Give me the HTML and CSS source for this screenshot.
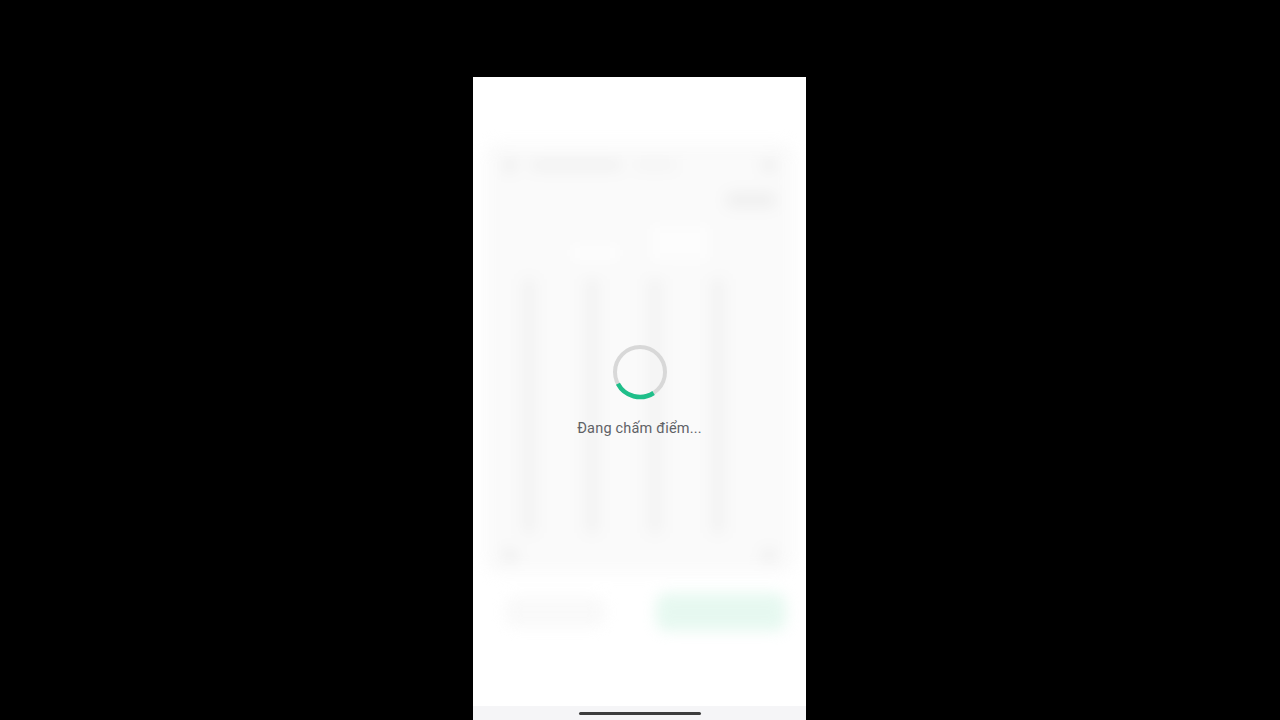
FILE: index.html
```html
<!DOCTYPE html>
<html lang="vi">
<head>
    <meta charset="UTF-8">
    <meta name="viewport" content="width=device-width, initial-scale=1.0">
    <title>Đang chấm điểm</title>
    <link rel="stylesheet" href="styles.css">
</head>
<body>

    <div class="phone">
        <div class="screen">

            <!-- Blurred page behind the loading overlay -->
            <div class="backdrop">
                <div class="bd-card">
                    <div class="bd-header">
                        <span class="bd-dot"></span>
                        <span class="bd-title"></span>
                        <span class="bd-sub"></span>
                        <span class="bd-dot"></span>
                    </div>
                    <div class="bd-row">
                        <span class="bd-chip"></span>
                    </div>
                    <div class="bd-mid">
                        <span class="bd-box"></span>
                        <span class="bd-box tall"></span>
                    </div>
                    <div class="bd-cols">
                        <span class="bd-col"></span>
                        <span class="bd-col"></span>
                        <span class="bd-col"></span>
                        <span class="bd-col"></span>
                    </div>
                    <div class="bd-foot">
                        <span class="bd-dot"></span>
                        <span class="bd-dot"></span>
                    </div>
                </div>
                <div class="bd-actions">
                    <span class="bd-ghost"></span>
                    <span class="bd-btn"></span>
                </div>
            </div>

            <!-- Loading overlay -->
            <div class="loading">
                <svg class="spinner" viewBox="0 0 56 56" width="56" height="56">
                    <circle cx="28" cy="28" r="25" fill="none" stroke="#d8d8d8" stroke-width="4"/>
                    <path d="M41.6 49 A25 25 0 0 1 5.9 39.7" fill="none" stroke="#1fbf8a" stroke-width="4.5" stroke-linecap="butt"/>
                </svg>
                <div class="loading-text">Đang chấm điểm...</div>
            </div>
        </div>

        <div class="home-area">
            <span class="home-bar"></span>
        </div>
    </div>

</body>
</html>
```

FILE: styles.css
```css
/* --- Page --- */
body {
    margin: 0;
    padding: 0 0 0 473px;
    background: #000;
    display: flex;
    height: 720px;
    overflow: hidden;
    font-family: Roboto, "Noto Sans", sans-serif;
}

/* --- Phone frame --- */
.phone {
    width: 333px;
    margin-top: 77px;
    height: 643px;
    background: #fff;
    display: flex; flex-direction: column;
}
.screen {
    flex: 1;
    position: relative;
    overflow: hidden;
}

/* --- Blurred background page --- */
.backdrop {
    position: absolute; inset: 0;
    padding: 66px 12px 0;
    display: flex; flex-direction: column; gap: 20px;
    filter: blur(7px);
    opacity: 0.45;
}
.bd-card {
    height: 430px;
    background: #f4f4f4;
    border-radius: 12px;
    padding: 10px 18px;
    box-sizing: border-box;
    display: flex; flex-direction: column; gap: 16px;
}
.bd-header {
    display: flex; align-items: center; gap: 14px;
    height: 24px;
}
.bd-dot {
    width: 14px; height: 14px;
    border-radius: 50%;
    background: #dcdcdc;
}
.bd-title { width: 90px; height: 10px; background: #e0e0e0; }
.bd-sub { width: 40px; height: 8px; background: #e6e6e6; margin-right: auto; }
.bd-row { display: flex; justify-content: flex-end; }
.bd-chip { width: 50px; height: 14px; background: #dcdcdc; border-radius: 7px; }
.bd-mid {
    display: flex; justify-content: center; gap: 30px;
    height: 40px;
}
.bd-box { width: 50px; height: 20px; background: #fbfbfb; margin-top: 20px; }
.bd-box.tall { width: 60px; height: 40px; margin-top: 0; }
.bd-cols {
    flex: 1;
    display: flex; gap: 51px;
    padding: 0 0 0 20px;
}
.bd-col { width: 12px; background: #e4e4e4; }
.bd-foot { display: flex; justify-content: space-between; }
.bd-actions {
    display: flex; justify-content: space-between; align-items: center;
    padding: 0 8px 0 20px;
}
.bd-ghost { width: 100px; height: 30px; background: #f2f2f2; border-radius: 8px; }
.bd-btn { width: 130px; height: 38px; background: #c9f1df; border-radius: 10px; }

/* --- Loading overlay --- */
.loading {
    position: absolute; inset: 0;
    display: flex; flex-direction: column; align-items: center;
    padding-top: 267px;
}
.spinner { display: block; }
.loading-text {
    margin-top: 19px;
    font-size: 14.5px;
    line-height: 20px;
    color: #5f6266;
    letter-spacing: 0.2px;
}

/* --- Home indicator --- */
.home-area {
    height: 14px;
    background: #f5f5f7;
    display: flex; justify-content: center; align-items: flex-start;
    padding-top: 6px;
    box-sizing: border-box;
}
.home-bar {
    width: 122px; height: 3px;
    border-radius: 2px;
    background: #3d3d3d;
}
```
